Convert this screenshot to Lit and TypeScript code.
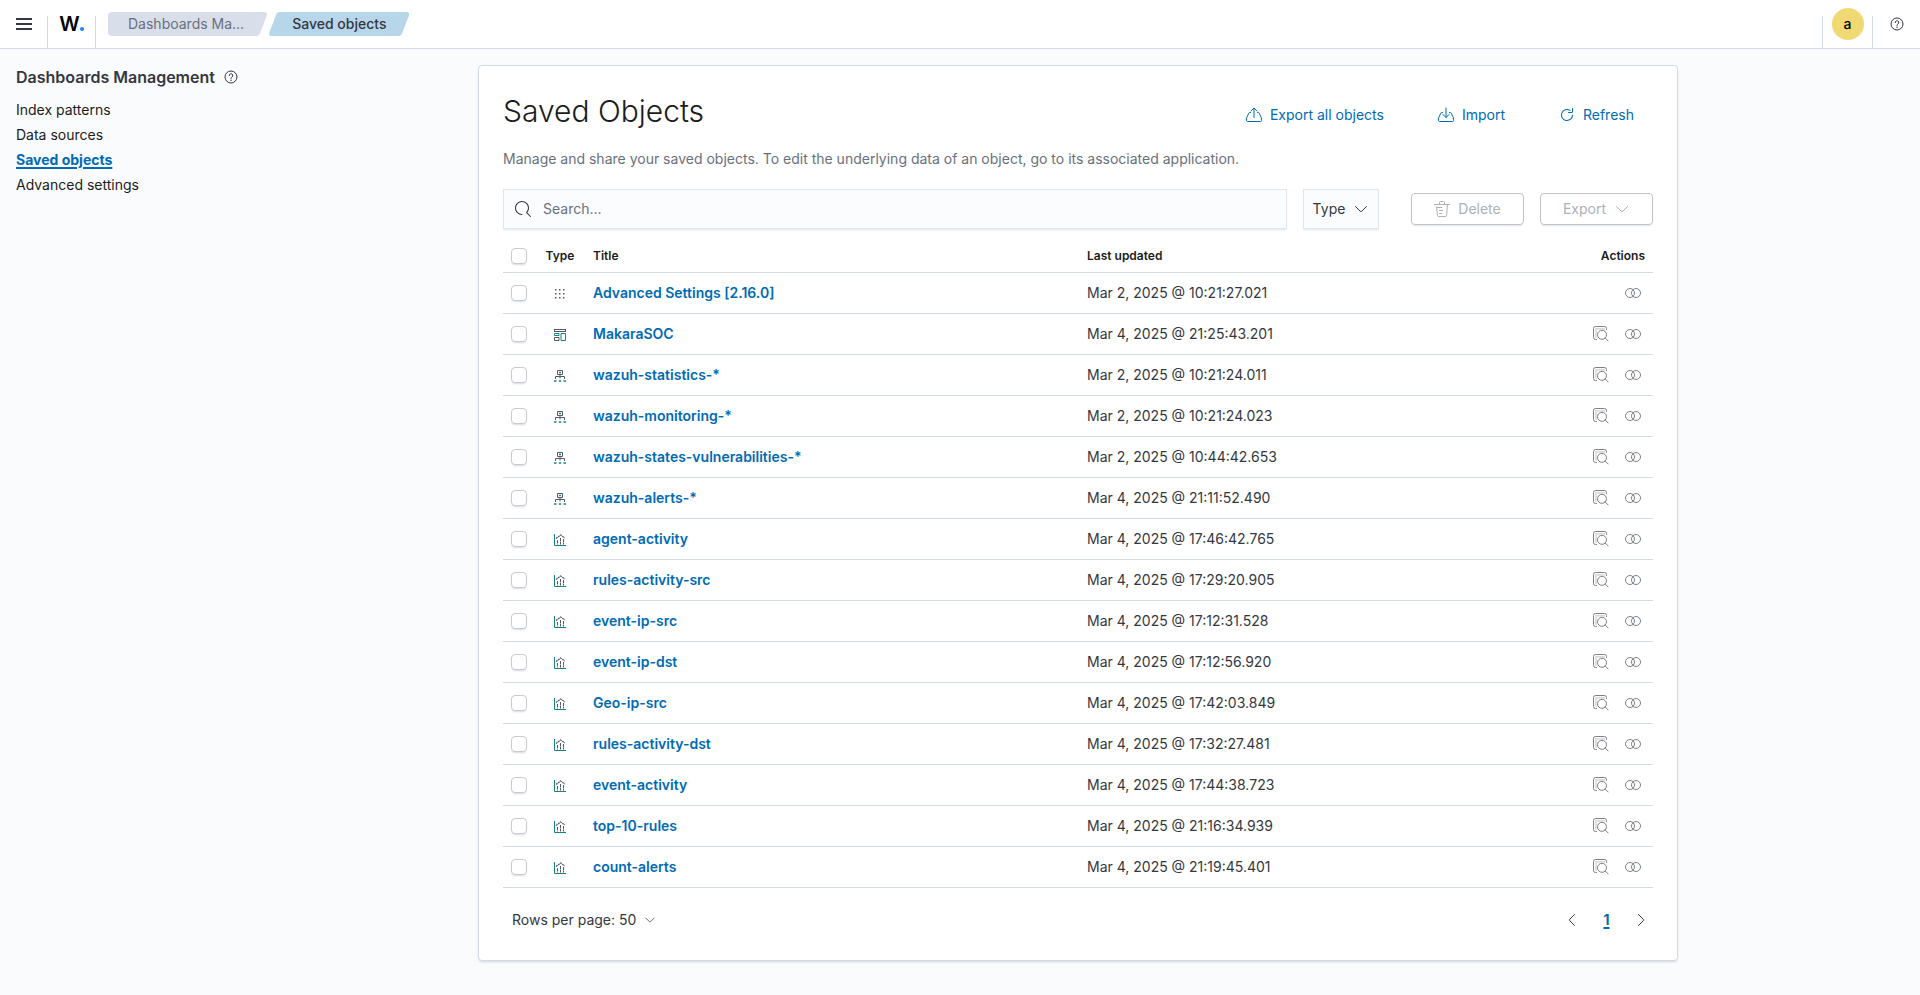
import { LitElement, html, css, svg, nothing } from "lit";
import { customElement, state } from "lit/decorators.js";

type ObjectType = "config" | "dashboard" | "index-pattern" | "visualization";

interface SavedObject {
  type: ObjectType;
  title: string;
  updated: string;
}

const OBJECTS: SavedObject[] = [
  { type: "config", title: "Advanced Settings [2.16.0]", updated: "Mar 2, 2025 @ 10:21:27.021" },
  { type: "dashboard", title: "MakaraSOC", updated: "Mar 4, 2025 @ 21:25:43.201" },
  { type: "index-pattern", title: "wazuh-statistics-*", updated: "Mar 2, 2025 @ 10:21:24.011" },
  { type: "index-pattern", title: "wazuh-monitoring-*", updated: "Mar 2, 2025 @ 10:21:24.023" },
  { type: "index-pattern", title: "wazuh-states-vulnerabilities-*", updated: "Mar 2, 2025 @ 10:44:42.653" },
  { type: "index-pattern", title: "wazuh-alerts-*", updated: "Mar 4, 2025 @ 21:11:52.490" },
  { type: "visualization", title: "agent-activity", updated: "Mar 4, 2025 @ 17:46:42.765" },
  { type: "visualization", title: "rules-activity-src", updated: "Mar 4, 2025 @ 17:29:20.905" },
  { type: "visualization", title: "event-ip-src", updated: "Mar 4, 2025 @ 17:12:31.528" },
  { type: "visualization", title: "event-ip-dst", updated: "Mar 4, 2025 @ 17:12:56.920" },
  { type: "visualization", title: "Geo-ip-src", updated: "Mar 4, 2025 @ 17:42:03.849" },
  { type: "visualization", title: "rules-activity-dst", updated: "Mar 4, 2025 @ 17:32:27.481" },
  { type: "visualization", title: "event-activity", updated: "Mar 4, 2025 @ 17:44:38.723" },
  { type: "visualization", title: "top-10-rules", updated: "Mar 4, 2025 @ 21:16:34.939" },
  { type: "visualization", title: "count-alerts", updated: "Mar 4, 2025 @ 21:19:45.401" },
];

const SECTIONS = ["Index patterns", "Data sources", "Saved objects", "Advanced settings"];

const glyph = (body: unknown, size = 16, box = 16) => html`
  <svg class="icon" width=${size} height=${size} viewBox="0 0 ${box} ${box}" fill="none" stroke="currentColor" aria-hidden="true">${body}</svg>
`;

const icons = {
  menu: () => glyph(svg`<path d="M0 3h16M0 8h16M0 13h16" stroke-width="2" />`),
  help: () => glyph(svg`
    <circle cx="8" cy="8" r="6" />
    <path d="M6.200 6.600a1.800 1.800 0 1 1 2.700 1.500c-.6.4-.9.7-.9 1.300" stroke-linecap="round" />
    <circle cx="8" cy="11.200" r=".7" fill="currentColor" stroke="none" />`),
  exportUp: () => glyph(svg`
    <path d="M8 10.500V1.200M5 4l3-3 3 3" stroke-linecap="round" />
    <path d="M4.500 5.500h-.8a1 1 0 0 0-.9.7L.6 10.800v2.700a1 1 0 0 0 1 1h12.800a1 1 0 0 0 1-1v-2.700L13.200 6.200a1 1 0 0 0-.9-.7h-.8" stroke-linecap="round" />`),
  importDown: () => glyph(svg`
    <path d="M8 1v9.300M5 7.500l3 3 3-3" stroke-linecap="round" />
    <path d="M4.500 5.500h-.8a1 1 0 0 0-.9.7L.6 10.800v2.700a1 1 0 0 0 1 1h12.800a1 1 0 0 0 1-1v-2.700L13.200 6.200a1 1 0 0 0-.9-.7h-.8" stroke-linecap="round" />`),
  refresh: () => glyph(svg`<path fill="currentColor" stroke="none" d="M11.228 2.942a.5.5 0 1 1-.538.842A5 5 0 1 0 13 8a.5.5 0 1 1 1 0 6 6 0 1 1-2.772-5.058zM14 1.500v3A1.500 1.500 0 0 1 12.500 6h-3a.5.5 0 0 1 0-1h3a.5.5 0 0 0 .5-.5v-3a.5.5 0 1 1 1 0z" />`),
  search: () => glyph(svg`<path fill="currentColor" stroke="none" d="M11.271 11.978l3.872 3.873a.502.502 0 0 0 .708 0 .502.502 0 0 0 0-.708l-3.565-3.564c2.380-2.747 2.267-6.923-.342-9.532-2.730-2.730-7.170-2.730-9.898 0-2.728 2.729-2.728 7.170 0 9.900a6.955 6.955 0 0 0 4.949 2.050.5.5 0 0 0 0-1 5.960 5.960 0 0 1-4.242-1.757 6.010 6.010 0 0 1 0-8.486 6.004 6.004 0 0 1 8.484 0 6.010 6.010 0 0 1 0 8.486.5.5 0 0 0 .034.738z" />`),
  down: (size = 16) => glyph(svg`<path d="M2.500 5.500l4.700 4.700a1.100 1.100 0 0 0 1.600 0l4.700-4.700" stroke-linecap="round" />`, size),
  left: () => glyph(svg`<path d="M10.500 2.500L5.800 7.200a1.100 1.100 0 0 0 0 1.600l4.700 4.700" stroke-linecap="round" />`),
  right: () => glyph(svg`<path d="M5.500 2.500l4.700 4.700a1.100 1.100 0 0 1 0 1.600l-4.700 4.700" stroke-linecap="round" />`),
  trash: () => glyph(svg`
    <path d="M0 3.500h16M5.500 3.500v-2a1 1 0 0 1 1-1h3a1 1 0 0 1 1 1v2M2.500 5.500l1 9a1 1 0 0 0 1 1h7a1 1 0 0 0 1-1l1-11M2 6.500h6M5 9.500h4M5 12.500h3" />`),
  relations: () => glyph(svg`
    <rect x=".5" y="3.500" width="9" height="9" rx="4.500" />
    <rect x="6.500" y="3.500" width="9" height="9" rx="4.500" />`),
  inspect: () => glyph(svg`
    <path d="M3.500 13.500h-1a2 2 0 0 1-2-2v-9a2 2 0 0 1 2-2h9a2 2 0 0 1 2 2v1" stroke-linecap="round" />
    <path d="M2.500 2.900h9M2.500 4.900h2M2.500 7h1M2.500 9h1M2.500 11h1" stroke-dasharray="1 1" />
    <circle cx="9" cy="8.800" r="4.500" />
    <path d="M12.200 12l3 3" stroke-linecap="round" />`),
};

const typeIcons: Record<ObjectType, () => unknown> = {
  config: () => glyph(svg`
    <g fill="currentColor" stroke="none">
      ${[1, 5, 9].map((y) => [1, 5, 9].map((x) => svg`<rect x=${x} y=${y} width="1.500" height="1.500" />`))}
    </g>`, 12, 12),
  dashboard: () => glyph(svg`
    <rect x=".5" y=".5" width="11" height="2" />
    <path d="M.5 8.500h4.500v3h-4.500z" />
    <path class="accent" d="M.5 4.500h4.500v2h-4.500zM7 4.500h4.500v7h-4.500z" />`, 12, 12),
  "index-pattern": () => glyph(svg`
    <path d="M3.500.5h5v4h-5zM6 4.500v4M1.500 9V6.500h9V9" />
    <path class="accent" d="M5 2.500h2M0 11h2.500M4.800 11h2.400M9.500 11h2.500" stroke-width="1.500" />`, 12, 12),
  visualization: () => glyph(svg`
    <path d="M2 4.500L6.500 1l4.500 3" stroke-dasharray="2 .6" stroke-width="1.200" />
    <path d="M3.500 6v4.500M6.500 4v6.500M9.500 5v5.500" stroke-dasharray="3 .5" />
    <path class="accent" d="M.5 0v11.500H12" />`, 12, 12),
};

@customElement("app-root")
export class AppRoot extends LitElement {
  static styles = css`
    :host {
      display: block;
      min-height: 100vh;
      background: #fafbfd;
      color: #343741;
      font: 14px/20px Inter, sans-serif;
    }
    * { box-sizing: border-box; }
    .icon { display: block; flex: none; }
    button {
      display: inline-flex;
      align-items: center;
      justify-content: center;
      gap: 8px;
      margin: 0;
      padding: 0;
      border: 0;
      background: none;
      color: inherit;
      font: inherit;
    }
    a { color: inherit; text-decoration: none; }

    .topbar {
      display: flex;
      justify-content: space-between;
      height: 49px;
      background: #fff;
      border-bottom: 1px solid #d3dae6;
    }
    .bar-group { display: flex; align-items: center; }
    .bar-item { width: 48px; height: 48px; display: flex; align-items: center; justify-content: center; }
    .divided { border-image: linear-gradient(transparent 16px, #d3dae6 16px) 1; border-style: solid; border-width: 0; }
    .divided.after { border-right-width: 1px; }
    .divided.before { border-left-width: 1px; }
    .wide { width: 50px; }
    .logo { font-size: 20px; font-weight: 600; line-height: 24px; color: #000; }
    .logo-mark { display: flex; align-items: baseline; }
    .logo-dot { width: 4px; height: 4px; border-radius: 50%; background: #1a84ff; }
    .crumbs { display: flex; gap: 2px; margin: 0 0 0 12px; padding: 0; list-style: none; }
    .crumb { position: relative; display: block; height: 24px; line-height: 24px; text-align: center; color: #69707d; }
    .crumb-shape { position: absolute; inset: 0; width: 100%; height: 100%; fill: #d8deea; }
    .crumb-text { position: relative; display: block; padding: 0 23px 0 20px; }
    .crumb.current { color: #343741; font-weight: 500; }
    .crumb.current .crumb-shape { fill: #b8d6ea; }
    .crumb.current .crumb-text { padding: 0 23px; }
    .avatar {
      width: 32px;
      height: 32px;
      border-radius: 50%;
      background: #f0d972;
      color: #000;
      font-weight: 500;
      line-height: 32px;
    }

    .page { display: flex; align-items: flex-start; }
    .side { width: 236px; flex: none; padding: 16px; }
    .side-title { display: flex; align-items: center; gap: 8px; margin: 0 0 8px; font-size: 16px; line-height: 24px; font-weight: 600; white-space: nowrap; }
    .side-list { margin: 0; padding: 0; list-style: none; color: #1a1c21; }
    .side-list li { line-height: 25px; }
    .side-list .active { color: #006bb4; font-weight: 700; text-decoration: underline; text-decoration-thickness: 2px; text-underline-offset: 2px; }
    main { flex: 1; min-width: 0; padding: 16px; }
    .panel {
      max-width: 1200px;
      margin: 0 auto;
      padding: 24px;
      background: #fff;
      border: 1px solid #d3dae6;
      border-radius: 4px;
      box-shadow: 0 2px 2px -1px rgba(152, 162, 179, 0.3), 0 1px 5px -2px rgba(152, 162, 179, 0.3);
    }
    .heading { display: flex; justify-content: space-between; align-items: flex-start; padding-right: 11px; }
    h1 { margin: 0; font-size: 30px; line-height: 42px; font-weight: 300; color: #1a1c21; }
    .heading-actions { display: flex; gap: 38px; padding-top: 5px; color: #006bb4; }
    .heading-actions button { height: 40px; padding: 0 8px; }
    .blurb { margin: 14px 0 20px; color: #69707d; }

    .toolbar { display: flex; align-items: center; gap: 16px; margin-bottom: 8px; }
    .search, .filter {
      height: 40px;
      background: #fbfcfd;
      border: 1px solid #e1e5ee;
      box-shadow: 0 2px 2px -1px rgba(152, 162, 179, 0.3);
    }
    .search { flex: 1; display: flex; align-items: center; gap: 12px; padding: 0 11px; }
    .search input { flex: 1; min-width: 0; border: 0; padding: 0; outline: 0; background: none; font: inherit; color: inherit; }
    .search input::placeholder { color: #69707d; opacity: 1; }
    .filter { width: 76px; margin-right: 16px; }
    .outlined {
      width: 113px;
      height: 32px;
      border: 1px solid #c2c3c6;
      border-radius: 4px;
      color: #adb0b5;
      box-shadow: 0 2px 2px -1px rgba(152, 162, 179, 0.3);
    }

    table { width: 100%; table-layout: fixed; border-collapse: separate; border-spacing: 0; }
    th { height: 36px; padding: 2px 8px 0; text-align: left; font-size: 12px; line-height: 18px; font-weight: 600; color: #1a1c21; border-bottom: 1px solid #d3dae6; }
    td { height: 41px; padding: 0 8px; border-bottom: 1px solid #d3dae6; }
    .col-check { width: 32px; }
    .col-type { width: 50px; }
    .col-actions { width: 80px; }
    .type { text-align: center; }
    .type .icon { display: inline-block; vertical-align: middle; color: #535966; }
    .accent { stroke: #17857d; }
    input[type="checkbox"] {
      appearance: none;
      display: block;
      width: 16px;
      height: 16px;
      margin: 0;
      border: 1px solid #c9cbcd;
      border-radius: 4px;
      background: #fff;
      box-shadow: 0 2px 2px -1px rgba(152, 162, 179, 0.4);
    }
    input[type="checkbox"]:checked { background: #006bb4; border-color: #006bb4; }
    .object-link { color: #006bb4; font-weight: 600; }
    .actions { text-align: right; }
    .row-actions { display: flex; justify-content: flex-end; gap: 16px; padding-right: 4px; color: #7d8086; }
    .row-actions button { width: 16px; height: 16px; }

    .pager { display: flex; justify-content: space-between; align-items: center; margin-top: 16px; padding: 0 4px 0 9px; height: 32px; }
    .pages { display: flex; align-items: center; gap: 16px; }
    .pages button { height: 24px; min-width: 16px; }
    .pages .page-number { color: #006bb4; font-weight: 700; text-decoration: underline; text-decoration-thickness: 2px; text-underline-offset: 2px; min-width: 21px; }
  `;

  @state() private selected = new Set<string>();

  private toggle(title: string) {
    const next = new Set(this.selected);
    next.has(title) ? next.delete(title) : next.add(title);
    this.selected = next;
  }

  private toggleAll() {
    this.selected = this.selected.size === OBJECTS.length ? new Set() : new Set(OBJECTS.map((o) => o.title));
  }

  private renderTopbar() {
    return html`
      <header class="topbar">
        <div class="bar-group">
          <button class="bar-item divided after" aria-label="Toggle navigation">${icons.menu()}</button>
          <a class="bar-item divided after logo" href="#" aria-label="Home"><span class="logo-mark">W<span class="logo-dot"></span></span></a>
          <nav aria-label="Breadcrumbs">
            <ol class="crumbs">
              <li>
                <a class="crumb" href="#">
                  <svg class="crumb-shape" viewBox="0 0 159 24" preserveAspectRatio="none" aria-hidden="true"><path d="M4 0H156q4 0 2.500 4L152 21q-1 3-4 3H4q-4 0-4-4V4q0-4 4-4z" /></svg>
                  <span class="crumb-text">Dashboards Ma...</span>
                </a>
              </li>
              <li>
                <span class="crumb current" aria-current="page">
                  <svg class="crumb-shape" viewBox="0 0 140 24" preserveAspectRatio="none" aria-hidden="true"><path d="M11 0H137q4 0 2.500 4L133 21q-1 3-4 3H3q-4 0-2.500-4L7 3q1-3 4-3z" /></svg>
                  <span class="crumb-text">Saved objects</span>
                </span>
              </li>
            </ol>
          </nav>
        </div>
        <div class="bar-group">
          <div class="bar-item wide divided before"><button class="avatar" aria-label="Account menu">a</button></div>
          <button class="bar-item divided before" aria-label="Help">${icons.help()}</button>
        </div>
      </header>
    `;
  }

  private renderRow(object: SavedObject) {
    return html`
      <tr>
        <td>
          <input type="checkbox" aria-label="Select ${object.title}" .checked=${this.selected.has(object.title)} @change=${() => this.toggle(object.title)} />
        </td>
        <td class="type">${typeIcons[object.type]()}</td>
        <td><a class="object-link" href="#">${object.title}</a></td>
        <td>${object.updated}</td>
        <td>
          <div class="row-actions">
            ${object.type === "config" ? nothing : html`<button aria-label="Inspect">${icons.inspect()}</button>`}
            <button aria-label="Relationships">${icons.relations()}</button>
          </div>
        </td>
      </tr>
    `;
  }

  render() {
    return html`
      ${this.renderTopbar()}
      <div class="page">
        <nav class="side" aria-label="Dashboards Management">
          <h2 class="side-title">Dashboards Management ${icons.help()}</h2>
          <ul class="side-list">
            ${SECTIONS.map((name) => html`<li><a class=${name === "Saved objects" ? "active" : ""} href="#">${name}</a></li>`)}
          </ul>
        </nav>
        <main>
          <section class="panel">
            <div class="heading">
              <h1>Saved Objects</h1>
              <div class="heading-actions">
                <button>${icons.exportUp()}Export all objects</button>
                <button>${icons.importDown()}Import</button>
                <button>${icons.refresh()}Refresh</button>
              </div>
            </div>
            <p class="blurb">Manage and share your saved objects. To edit the underlying data of an object, go to its associated application.</p>
            <div class="toolbar">
              <label class="search">
                ${icons.search()}
                <input type="search" placeholder="Search..." aria-label="Search saved objects" />
              </label>
              <button class="filter">Type ${icons.down()}</button>
              <button class="outlined" disabled>${icons.trash()}Delete</button>
              <button class="outlined" disabled>Export ${icons.down()}</button>
            </div>
            <table>
              <colgroup>
                <col class="col-check" /><col class="col-type" /><col /><col /><col class="col-actions" />
              </colgroup>
              <thead>
                <tr>
                  <th>
                    <input type="checkbox" aria-label="Select all rows" .checked=${this.selected.size === OBJECTS.length} @change=${this.toggleAll} />
                  </th>
                  <th class="type">Type</th>
                  <th>Title</th>
                  <th>Last updated</th>
                  <th class="actions">Actions</th>
                </tr>
              </thead>
              <tbody>${OBJECTS.map((object) => this.renderRow(object))}</tbody>
            </table>
            <div class="pager">
              <button>Rows per page: 50 ${icons.down(12)}</button>
              <div class="pages">
                <button aria-label="Previous page">${icons.left()}</button>
                <button class="page-number" aria-current="page">1</button>
                <button aria-label="Next page">${icons.right()}</button>
              </div>
            </div>
          </section>
        </main>
      </div>
    `;
  }
}
